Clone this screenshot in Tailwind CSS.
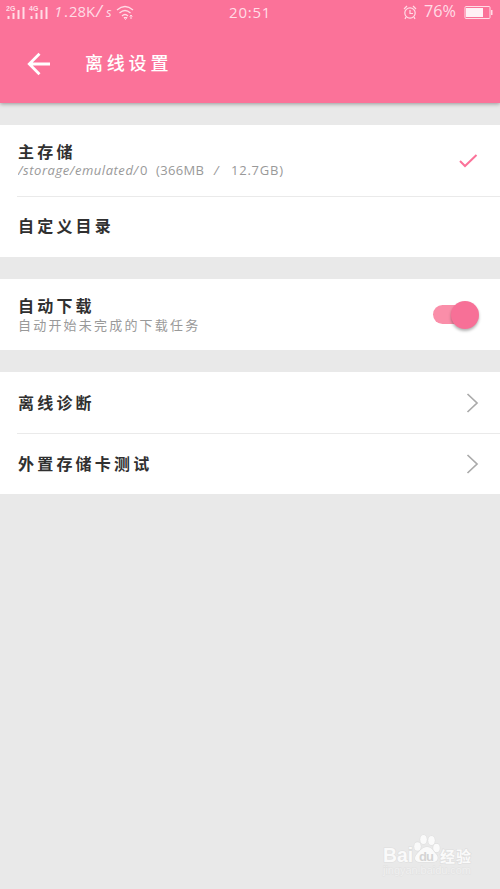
<!DOCTYPE html>
<html lang="zh-CN">
<head>
<meta charset="utf-8">
<title>离线设置</title>
<script src="https://cdn.jsdelivr.net/npm/@tailwindcss/browser@4"></script>
</head>
<body class="w-[500px] h-[889px] overflow-hidden bg-[#e9e9e9] font-['Noto_Sans_CJK_SC',sans-serif] text-[#303030] flex flex-col">
<header class="h-[103px] shrink-0 bg-[#fb7299] text-white shadow-[0_1px_4px_rgba(0,0,0,0.35)]">
  <div class="h-[25px] relative flex items-center justify-between pl-[6px] pr-[7px] text-[#ffdce6] font-['Open_Sans',sans-serif] text-[15px] leading-[24px]">
    <div class="flex items-center">
      <svg class="w-[47px] h-[25px]" viewBox="0 0 47 25" fill="currentColor">
        <path d="M1.500 16h2v3h-2zM6.500 13h2v6h-2zM11.500 10h2v9h-2zM16.500 7h2v12h-2zM24.500 16h2v3h-2zM29.500 13h2v6h-2zM34.500 10h2v9h-2zM39.500 7h2v12h-2z"/>
        <text x="0" y="11" font-size="7" font-weight="700" font-family="Liberation Sans">2G</text>
        <text x="23" y="11" font-size="7" font-weight="700" font-family="Liberation Sans">4G</text>
      </svg>
      <svg class="w-[62px] h-[25px]" viewBox="0 0 62 25" fill="currentColor" font-family="Open Sans" font-size="15"><text y="17"><tspan x="1" font-style="italic">1</tspan><tspan x="11">.</tspan><tspan x="16" textLength="26" lengthAdjust="spacingAndGlyphs">28K</tspan><tspan x="43" font-size="17" font-style="italic">/</tspan><tspan x="53" font-size="13" font-style="italic">s</tspan></text></svg>
      <svg class="w-[20px] h-[25px]" viewBox="0 0 20 25" fill="none" stroke="currentColor" stroke-width="1.3"><path d="M2 10q8-7 16 0M4.500 13q5.500-5 11 0M7 16q3-3 6 0"/><path d="M9 17.500h3l-1.500 2zM16 15v4m-1.300-2.500L16 15l1.300 1.500" stroke-width="1"/></svg>
    </div>
    <div class="absolute left-[229px] top-0 tracking-[0.8px]">20:51</div>
    <div class="flex items-center">
      <svg class="w-[14px] h-[25px] mr-[7px]" viewBox="0 0 14 25" fill="none" stroke="currentColor" stroke-width="1.200"><circle cx="7" cy="13" r="5.200"/><path d="M7 10v3.500h3M1 9l3-3M10 6l3 3M3 17l-1 2M11 17l1 2"/></svg>
      <svg class="w-[33px] h-[25px] mr-[7px]" viewBox="0 0 33 25" fill="currentColor" font-family="Open Sans" font-size="16"><text x="0" y="16.500" textLength="32" lengthAdjust="spacingAndGlyphs">76%</text></svg>
      <svg class="w-[29px] h-[25px]" viewBox="0 0 29 25"><rect x="1" y="6.500" width="25" height="12" rx="1" fill="none" stroke="currentColor"/><path d="M2 8h17v9H2z" fill="#fff0f5"/><path d="M27 10h1.500v5H27z" fill="currentColor"/></svg>
    </div>
  </div>
  <div class="flex items-center h-[76px] pl-[27px]">
    <svg class="w-[24px] h-[24px] mt-[2px]" viewBox="0 0 24 24" fill="none" stroke="white" stroke-width="2.800"><path d="M23 12H2.500M12.500 1.800L2.300 12l10.200 10.200"/></svg>
    <h1 class="ml-[34px] pb-[2px] text-[18px] font-medium tracking-[3.800px]">离线设置</h1>
  </div>
</header>
<main class="pt-[22px] flex flex-col gap-[22px] text-[16px] font-bold tracking-[3.200px]">
  <section class="bg-white h-[132px]">
    <div class="h-[71px] flex items-center justify-between pl-[18px] pr-[22px]">
      <div>
        <div class="leading-[18px] pb-[2px]">主存储</div>
        <svg class="w-[268px] h-[18px] block tracking-normal" viewBox="0 0 268 18" fill="#999" font-family="Open Sans" font-size="13" font-weight="400"><text y="13"><tspan x="0" textLength="120" lengthAdjust="spacing" font-style="italic">/storage/emulated/</tspan><tspan x="122">0</tspan><tspan x="138" textLength="48" lengthAdjust="spacing">(366MB</tspan><tspan x="196" font-style="italic">/</tspan><tspan x="213" textLength="52" lengthAdjust="spacing">12.7GB)</tspan></text></svg>
      </div>
      <svg class="w-[20px] h-[16px]" viewBox="0 0 20 16" fill="none" stroke="#fb7299" stroke-width="2"><path d="M2 8l5 5L18.500 2"/></svg>
    </div>
    <div class="ml-[17px] h-[61px] border-t border-[#eaeaea] flex items-center pl-px pb-[4px]">自定义目录</div>
  </section>
  <section class="bg-white h-[71px] flex items-center justify-between pl-[18px] pr-[21px]">
    <div>
      <div class="leading-[18px] pb-[2px]">自动下载</div>
      <div class="leading-[18px] text-[13px] font-normal tracking-[2.200px] text-[#999]">自动开始未完成的下载任务</div>
    </div>
    <div class="w-[46px] h-[28px] flex items-center justify-end rounded-full relative">
      <div class="absolute left-0 w-[36px] h-[19px] bg-[#fa8ea9] rounded-full"></div>
      <div class="relative w-[28px] h-[28px] rounded-full bg-[#f77097] shadow-[0_2px_3px_rgba(0,0,0,0.3)]"></div>
    </div>
  </section>
  <section class="bg-white h-[122px]">
    <div class="h-[61px] flex items-center justify-between pl-[18px] pr-[21px]">
      <span class="pb-[2px]">离线诊断</span>
      <svg class="w-[13px] h-[20px]" viewBox="0 0 13 20" fill="none" stroke="#aaa" stroke-width="1.700"><path d="M1.500 1l9.500 9-9.500 9"/></svg>
    </div>
    <div class="ml-[17px] h-[61px] border-t border-[#eaeaea] flex items-center justify-between pl-px pr-[21px]">
      <span class="pb-[3px]">外置存储卡测试</span>
      <svg class="w-[13px] h-[20px]" viewBox="0 0 13 20" fill="none" stroke="#aaa" stroke-width="1.700"><path d="M1.500 1l9.500 9-9.500 9"/></svg>
    </div>
  </section>
</main>
<footer class="mt-auto self-end mr-[27px] mb-[8px]">
  <svg class="w-[92px] h-[48px] block" viewBox="0 0 92 48" fill="#fafafa" stroke="#dedede" stroke-width="1.2" paint-order="stroke">
    <g><ellipse cx="36.500" cy="13.500" rx="3.300" ry="4.300"/><ellipse cx="42.500" cy="6.500" rx="3.300" ry="4.500"/><ellipse cx="50.500" cy="7.500" rx="3.300" ry="4.500"/><ellipse cx="55.500" cy="15" rx="3.300" ry="4.300"/><path d="M46 14c5 0 6 4 9 7s2 8-3 8H39c-6 0-6-5-3-8s5-7 10-7z"/></g>
    <text x="2" y="29" font-size="19.500" font-weight="700" font-family="Liberation Sans" textLength="30" lengthAdjust="spacingAndGlyphs">Bai</text>
    <text x="38" y="27.500" font-size="13" font-weight="700" font-family="Liberation Sans" fill="#d4d4d4" stroke="none" textLength="15">du</text>
    <text x="59" y="28.500" font-size="15" font-weight="700" font-family="Noto Sans CJK SC" textLength="31">经验</text>
    <text x="2" y="41" font-size="11" font-family="Liberation Sans" fill="#f0f0f0" stroke="#e1e1e1" stroke-width=".8" textLength="88">jingyan.baidu.com</text>
  </svg>
</footer>
</body>
</html>
